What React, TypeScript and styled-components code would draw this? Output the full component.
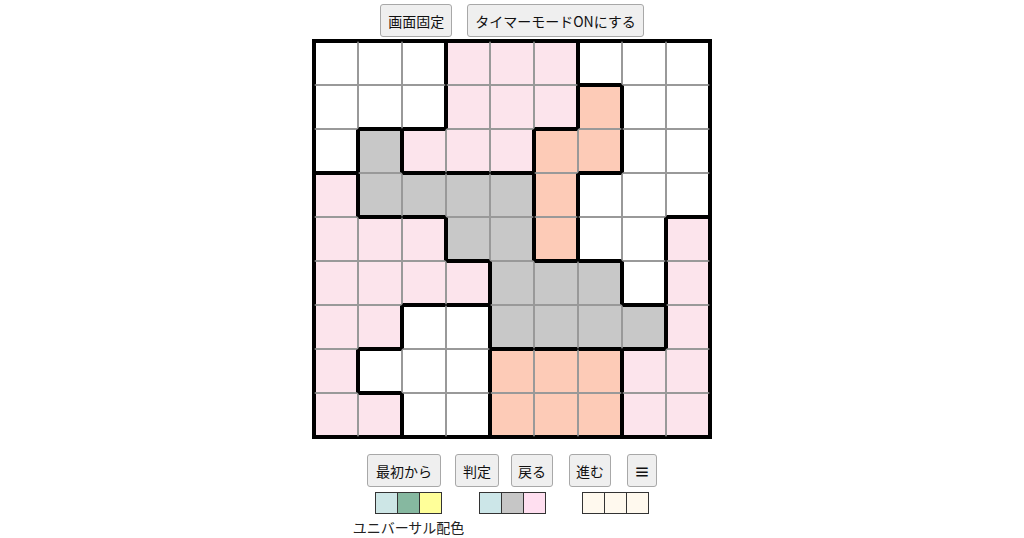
import React from "react";
import styled, { createGlobalStyle } from "styled-components";

const GlobalStyle = createGlobalStyle`
  html, body { margin: 0; padding: 0; background: #ffffff; }
  body { font-family: "Noto Sans CJK JP", "Noto Sans", sans-serif; color: #222; }
`;

const Page = styled.div`
  display: flex;
  flex-direction: column;
  align-items: center;
  padding-top: 4px;
`;

const ButtonBar = styled.div<{ $top?: number }>`
  display: flex;
  align-items: center;
  margin-top: ${(p) => p.$top ?? 0}px;
`;

const Button = styled.button<{ $gap?: number; $px?: number; $icon?: boolean }>`
  margin-left: ${(p) => p.$gap ?? 0}px;
  height: 33px;
  padding: 0 ${(p) => p.$px ?? 7}px;
  font-family: "Noto Sans CJK JP", "Noto Sans", sans-serif;
  font-size: ${(p) => (p.$icon ? 16 : 14)}px;
  font-weight: ${(p) => (p.$icon ? 700 : 400)};
  color: #111;
  background: #efefef;
  border: 1px solid #a8a8a8;
  border-radius: 3px;
  line-height: 1;
  white-space: nowrap;
  cursor: pointer;
`;

const Board = styled.div`
  margin-top: 2px;
  display: grid;
  grid-template-columns: repeat(9, 44px);
  grid-auto-rows: 44px;
  border: 2px solid #000;
`;

const edge = (thick: boolean) => (thick ? "2px solid #000" : "1px solid #999");

const Cell = styled.div<{ $fill: string; $t: boolean; $r: boolean; $b: boolean; $l: boolean }>`
  box-sizing: border-box;
  background: ${(p) => p.$fill};
  border-top: ${(p) => edge(p.$t)};
  border-right: ${(p) => edge(p.$r)};
  border-bottom: ${(p) => edge(p.$b)};
  border-left: ${(p) => edge(p.$l)};
`;

const PaletteRow = styled.div`
  display: flex;
  margin-top: 5px;
`;

const PaletteGroup = styled.div<{ $gap?: number }>`
  display: flex;
  flex-direction: column;
  align-items: center;
  width: 68px;
  margin-left: ${(p) => p.$gap ?? 0}px;
`;

const Swatches = styled.div`
  display: flex;
  border-left: 1px solid #333;
`;

const Swatch = styled.div<{ $color: string }>`
  box-sizing: border-box;
  width: 22px;
  height: 22px;
  background: ${(p) => p.$color};
  border: 1px solid #333;
  border-left: none;
`;

const PaletteLabel = styled.div`
  margin-top: 3px;
  font-size: 14px;
  line-height: 20px;
  white-space: nowrap;
  color: #222;
`;

const regions = [
  "AAABBBCCC",
  "AAABBBDCC",
  "AEBBBDDCC",
  "FEEEEDCCC",
  "FFFEEDCCG",
  "FFFFEEECG",
  "FFHHEEEEG",
  "FHHHIIIGG",
  "FFHHIIIGG",
];

const WHITE = "#ffffff";
const PINK = "#fce4ec";
const ORANGE = "#fdcbb7";
const GRAY = "#c8c8c8";

const regionColor: Record<string, string> = {
  A: WHITE,
  B: PINK,
  C: WHITE,
  D: ORANGE,
  E: GRAY,
  F: PINK,
  G: PINK,
  H: WHITE,
  I: ORANGE,
};

const at = (r: number, c: number) =>
  r < 0 || r > 8 || c < 0 || c > 8 ? "" : regions[r][c];

const palettes = [
  { colors: ["#cde6e6", "#86b8a0", "#ffff99"], label: "ユニバーサル配色", gap: 0 },
  { colors: ["#cce6e8", "#c6c6c6", "#ffdff0"], gap: 36 },
  { colors: ["#fff9ee", "#fff9ee", "#fff9ee"], gap: 35 },
];

export default function App() {
  return (
    <>
      <GlobalStyle />
      <Page>
        <ButtonBar>
          <Button>画面固定</Button>
          <Button $gap={15}>タイマーモードONにする</Button>
        </ButtonBar>
        <Board>
          {regions.map((row, r) =>
            row.split("").map((id, c) => (
              <Cell
                key={`${r}-${c}`}
                $fill={regionColor[id]}
                $t={at(r - 1, c) !== id}
                $r={at(r, c + 1) !== id}
                $b={at(r + 1, c) !== id}
                $l={at(r, c - 1) !== id}
              />
            ))
          )}
        </Board>
        <ButtonBar $top={15}>
          <Button $px={8}>最初から</Button>
          <Button $gap={14}>判定</Button>
          <Button $gap={12} $px={6}>戻る</Button>
          <Button $gap={16} $px={6}>進む</Button>
          <Button $gap={16} $px={6} $icon>≡</Button>
        </ButtonBar>
        <PaletteRow>
          {palettes.map((p, i) => (
            <PaletteGroup key={i} $gap={p.gap}>
              <Swatches>
                {p.colors.map((col, j) => (
                  <Swatch key={j} $color={col} />
                ))}
              </Swatches>
              {p.label && <PaletteLabel>{p.label}</PaletteLabel>}
            </PaletteGroup>
          ))}
        </PaletteRow>
      </Page>
    </>
  );
}
